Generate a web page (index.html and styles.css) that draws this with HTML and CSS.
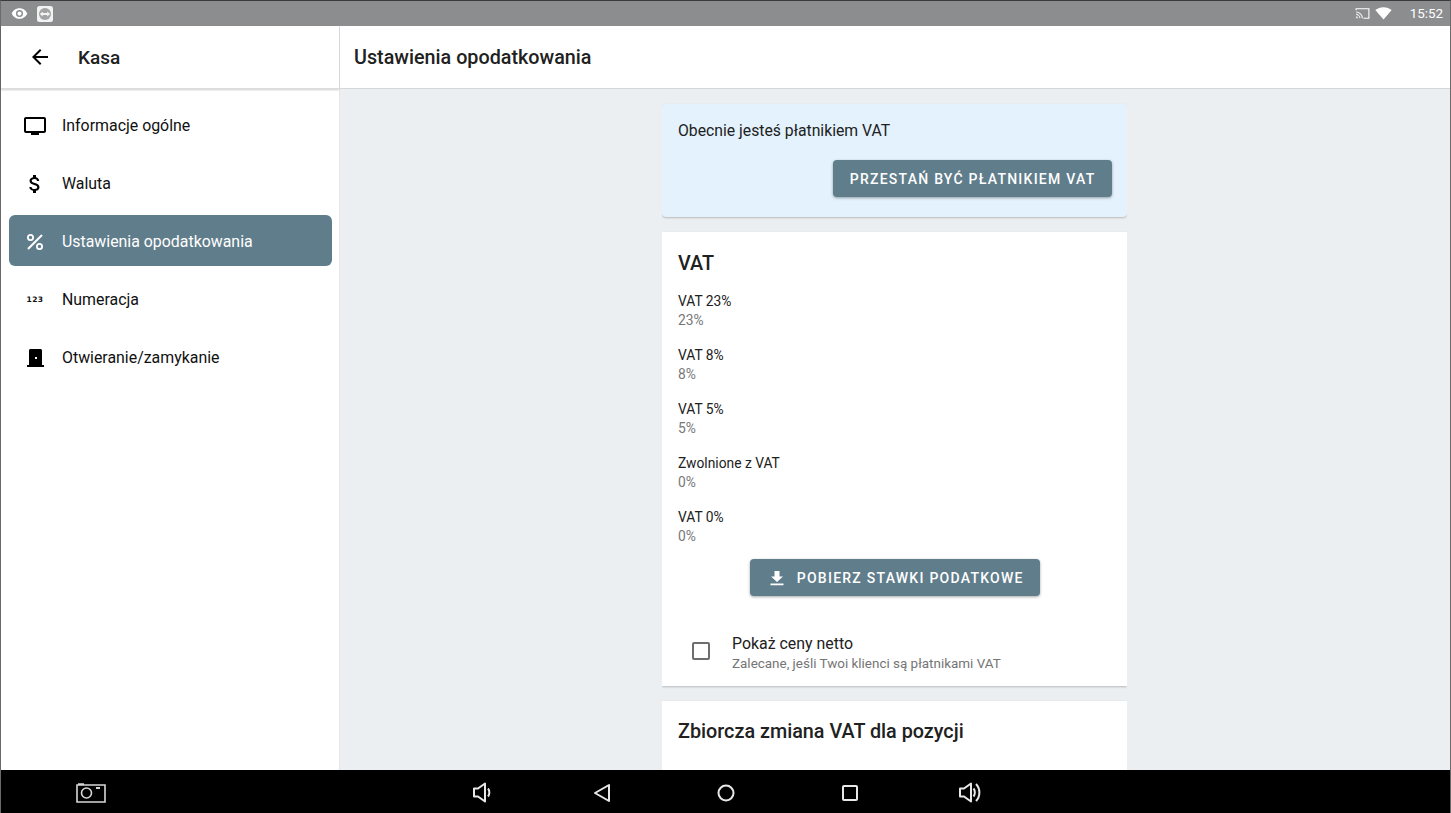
FILE: index.html
```html
<!DOCTYPE html>
<html>
<head>
<meta charset="utf-8">
<title>Ustawienia opodatkowania</title>
<link rel="stylesheet" href="styles.css">
</head>
<body>
<div class="screen">
	<div class="status">
		<div class="status-left">
			<svg class="ic-eye" viewBox="0 0 24 24"><path fill="#fff" d="M12 4.500C7 4.500 2.700 7.600 1 12c1.700 4.400 6 7.500 11 7.500s9.300-3.100 11-7.500c-1.700-4.400-6-7.500-11-7.500zM12 17a5 5 0 1 1 0-10 5 5 0 0 1 0 10zm0-8a3 3 0 1 0 0 6 3 3 0 0 0 0-6z"/></svg>
			<svg class="ic-tv" viewBox="0 0 16 16"><rect width="16" height="16" rx="2.500" fill="#f2f2f2"/><circle cx="8" cy="8" r="6" fill="#a3a3a3"/><path fill="#f2f2f2" d="M2.800 8l3-2.600v1.700h4.400V5.400l3 2.600-3 2.600V8.900H5.800v1.700z"/></svg>
		</div>
		<div class="status-right">
			<svg class="ic-cast" viewBox="0 0 16 12"><path fill="none" stroke="#fff" stroke-width="1.200" d="M1 2.500V.8h14v10.400H9"/><path fill="#fff" opacity=".85" d="M1 3.700a7.500 7.500 0 0 1 7.500 7.500H7.200A6.200 6.200 0 0 0 1 5zm0 2.700a4.800 4.800 0 0 1 4.800 4.800H4.500A3.500 3.500 0 0 0 1 7.700zm0 2.700a2.100 2.100 0 0 1 2.100 2.100H1z"/></svg>
			<svg class="ic-wifi" viewBox="0 0 18 14"><path fill="#fff" d="M9 13.500L.2 3.300C2.500 1.300 5.600.2 9 .2s6.500 1.100 8.800 3.100z"/></svg>
			<span class="clock">15:52</span>
		</div>
	</div>

	<div class="app">
		<div class="side">
			<div class="side-head">
				<svg class="ic-back" viewBox="0 0 24 24"><path d="M20 11H7.800l5.600-5.600L12 4l-8 8 8 8 1.400-1.400L7.800 13H20z"/></svg>
				<span class="side-title">Kasa</span>
			</div>
			<div class="menu">
				<div class="item">
					<span class="item-ic"><svg width="24" height="24" viewBox="0 0 24 24"><path d="M21 3H3c-1.100 0-2 .9-2 2v12c0 1.100.9 2 2 2h5v2h8v-2h5c1.100 0 2-.9 2-2V5c0-1.100-.9-2-2-2zm0 14H3V5h18z"/></svg></span>
					Informacje ogólne
				</div>
				<div class="item">
					<span class="item-ic"><svg width="24" height="24" viewBox="0 0 24 24"><path d="M11.800 10.900c-2.270-.59-3-1.200-3-2.150 0-1.090 1.010-1.850 2.700-1.850 1.780 0 2.440.85 2.500 2.100h2.210c-.07-1.720-1.120-3.300-3.210-3.810V3h-3v2.160c-1.940.42-3.500 1.680-3.500 3.610 0 2.310 1.910 3.460 4.700 4.130 2.500.6 3 1.480 3 2.410 0 .69-.49 1.790-2.700 1.790-2.060 0-2.870-.92-2.980-2.100h-2.200c.12 2.190 1.760 3.420 3.680 3.830V21h3v-2.150c1.950-.37 3.500-1.500 3.500-3.550 0-2.840-2.430-3.810-4.700-4.400z"/></svg></span>
					Waluta
				</div>
				<div class="item active">
					<span class="item-ic"><svg width="24" height="24" viewBox="0 0 24 24"><path fill="#fff" d="M7.500 4A3.500 3.500 0 1 0 7.500 11 3.500 3.500 0 0 0 7.500 4zm0 5.200a1.700 1.700 0 1 1 0-3.400 1.700 1.700 0 0 1 0 3.400zM16.500 13a3.500 3.500 0 1 0 0 7 3.500 3.500 0 0 0 0-7zm0 5.200a1.700 1.700 0 1 1 0-3.400 1.700 1.700 0 0 1 0 3.400zM18.300 4.300l1.400 1.400L5.700 19.700l-1.400-1.400z"/></svg></span>
					Ustawienia opodatkowania
				</div>
				<div class="item">
					<span class="item-ic num-ic">123</span>
					Numeracja
				</div>
				<div class="item">
					<span class="item-ic"><svg width="24" height="24" viewBox="0 0 24 24"><path d="M19 19V4.500C19 3.700 18.300 3 17.500 3h-10C6.700 3 6 3.700 6 4.500V19H4v2h17v-2zm-5-6h-2v-2h2z"/></svg></span>
					Otwieranie/zamykanie
				</div>
			</div>
		</div>

		<div class="main">
			<div class="top-bar">Ustawienia opodatkowania</div>
			<div class="content">
				<div class="card card-blue">
					<p class="vat-note">Obecnie jesteś płatnikiem VAT</p>
					<div class="right-btn"><span class="btn">PRZESTAŃ BYĆ PŁATNIKIEM VAT</span></div>
				</div>

				<div class="card card-vat">
					<h3>VAT</h3>
					<div class="rate"><div>VAT 23%</div><small>23%</small></div>
					<div class="rate"><div>VAT 8%</div><small>8%</small></div>
					<div class="rate"><div>VAT 5%</div><small>5%</small></div>
					<div class="rate"><div>Zwolnione z VAT</div><small>0%</small></div>
					<div class="rate"><div>VAT 0%</div><small>0%</small></div>
					<div class="center-btn">
						<span class="btn btn-dl">
							<svg width="18" height="18" viewBox="0 0 18 18"><path fill="#fff" d="M6.500 2h5v5.500H15L9 13 3 7.500h3.500zM2.500 14.600h13v1.700h-13z"/></svg>
							POBIERZ STAWKI PODATKOWE
						</span>
					</div>
					<div class="check-row">
						<span class="box"></span>
						<div>
							<div class="check-title">Pokaż ceny netto</div>
							<div class="check-sub">Zalecane, jeśli Twoi klienci są płatnikami VAT</div>
						</div>
					</div>
				</div>

				<div class="card card-bulk">
					<h3>Zbiorcza zmiana VAT dla pozycji</h3>
				</div>
			</div>
		</div>
	</div>

	<div class="nav">
		<svg class="nav-cam" width="30" height="21" viewBox="0 0 30 21"><g fill="none" stroke="#d8d8d8" stroke-width="1.600"><path d="M1 3h28v17H1zM2 2h6"/><circle cx="10.500" cy="11" r="5"/></g><path fill="#d8d8d8" d="M20 5h4v2h-4z"/></svg>
		<svg class="nav-vol" width="20" height="21" viewBox="0 0 20 21"><g fill="none" stroke="#e8e8e8" stroke-width="2" stroke-linejoin="round"><path d="M2 6.500h4L13 1.500v18l-7-5H2z"/><path d="M16 6.500c1.800 2.200 1.800 5.800 0 8"/></g></svg>
		<svg class="nav-back" width="18" height="20" viewBox="0 0 18 20"><path fill="none" stroke="#e8e8e8" stroke-width="2" stroke-linejoin="round" d="M16 2v16L2 10z"/></svg>
		<svg class="nav-home" width="18" height="18" viewBox="0 0 18 18"><circle cx="9" cy="9" r="7.500" fill="none" stroke="#e8e8e8" stroke-width="2"/></svg>
		<svg class="nav-recent" width="16" height="16" viewBox="0 0 16 16"><rect x="1" y="1" width="14" height="14" rx="1" fill="none" stroke="#e8e8e8" stroke-width="2"/></svg>
		<svg class="nav-volup" width="24" height="21" viewBox="0 0 24 21"><g fill="none" stroke="#e8e8e8" stroke-width="2" stroke-linejoin="round"><path d="M2 6.500h4L13 1.500v18l-7-5H2z"/><path d="M15.500 6.500c1.800 2.200 1.800 5.800 0 8"/><path d="M18 2c4.500 4.500 4.500 12.500 0 17"/></g></svg>
	</div>
</div>
</body>
</html>
```

FILE: styles.css
```css
* {
  box-sizing: border-box;
}

html, body {
  margin: 0;
  height: 100%;
}

body {
  font-family: Roboto, "Liberation Sans", sans-serif;
  color: #212121;
  overflow: hidden;
}

.screen {
  width: 1451px;
  height: 813px;
  display: flex;
  flex-direction: column;
  border-left: 1px solid #6a6a6a;
  border-right: 1px solid #6a6a6a;
  border-top: 1px solid #3a3a3a;
}

/* status bar */
.status {
  height: 25px;
  background: #8c8d8f;
  display: flex;
  align-items: center;
  justify-content: space-between;
  padding: 0 7px 0 10px;
  flex: none;
}

.status-left, .status-right {
  display: flex;
  align-items: center;
}

.ic-eye {
  width: 17px;
  height: 17px;
  margin-right: 9px;
}

.ic-tv {
  width: 16px;
  height: 16px;
}

.ic-cast {
  width: 15px;
  height: 11px;
  margin-right: 5px;
}

.ic-wifi {
  width: 17px;
  height: 13px;
  margin-right: 18px;
}

.clock {
  color: #fff;
  font-size: 13.4px;
}

/* app */
.app {
  flex: 1;
  display: flex;
  min-height: 0;
}

.side {
  width: 339px;
  flex: none;
  background: #fff;
  border-right: 1px solid #e4e6e8;
}

.side-head {
  height: 63px;
  display: flex;
  align-items: center;
  padding-left: 27px;
  border-bottom: 1px solid #ddd;
  box-shadow: 0 1px 2px rgba(0,0,0,.2);
}

.ic-back {
  width: 24px;
  height: 24px;
}

.side-title {
  font-size: 19px;
  font-weight: 500;
  margin-left: 26px;
}

.menu {
  padding: 10px 7px 0 8px;
}

.item {
  height: 51px;
  margin-bottom: 7px;
  padding-top: 2px;
  display: flex;
  align-items: center;
  font-size: 15.9px;
  color: #111;
  border-radius: 6px;
}

.item-ic {
  width: 24px;
  height: 24px;
  margin: 0 15px 0 14px;
  display: block;
}

.num-ic {
  font-family: "DejaVu Sans", sans-serif;
  font-size: 7.5px;
  font-weight: 700;
  line-height: 24px;
  text-align: center;
  letter-spacing: .5px;
}

.active {
  background: #607d8b;
  color: #fff;
}

/* right part */
.main {
  flex: 1;
  min-width: 0;
  display: flex;
  flex-direction: column;
  background: #eceff1;
}

.top-bar {
  height: 63px;
  flex: none;
  background: #fff;
  border-bottom: 1px solid #d5d7d9;
  display: flex;
  align-items: center;
  padding: 1px 0 0 14px;
  font-size: 19.75px;
  font-weight: 500;
}

.content {
  flex: 1;
  overflow: hidden;
  width: 465px;
  margin: 0 323px 0 322px;
  padding-top: 15px;
}

.card {
  background: #fff;
  margin-bottom: 15px;
  box-shadow: 0 1px 2px rgba(0,0,0,.22);
  padding: 0 15px 0 16px;
}

.card h3 {
  margin: 0;
  font-size: 19.8px;
  font-weight: 500;
}

.card-blue {
  background: #e3f2fd;
  border-radius: 4px;
  height: 113px;
  padding-top: 18px;
}

.vat-note {
  margin: 0;
  font-size: 15.75px;
  line-height: 18px;
}

.right-btn {
  display: flex;
  justify-content: flex-end;
  margin-top: 20px;
}

.btn {
  display: inline-flex;
  align-items: center;
  height: 37px;
  padding: 0 16.5px;
  background: #607d8b;
  color: #fff;
  font-size: 14px;
  font-weight: 500;
  letter-spacing: 1.25px;
  border-radius: 4px;
  box-shadow: 0 1px 3px rgba(0,0,0,.35);
}

.btn-dl {
  padding-left: 18px;
}

.btn-dl svg {
  margin-right: 11px;
}

.card-vat {
  height: 454px;
  padding-top: 19px;
}

.card-vat h3 {
  line-height: 26px;
  margin-bottom: 15px;
}

.rate {
  height: 54px;
  font-size: 13.8px;
  line-height: 19px;
}

.rate small {
  font-size: 13.8px;
  color: #777;
}

.center-btn {
  display: flex;
  justify-content: center;
  margin: -3px -1px 0 -1px;
}

.check-row {
  display: flex;
  margin-top: 38px;
  padding-left: 14px;
}

.box {
  width: 18px;
  height: 18px;
  margin: 8px 22px 0 0;
  border: 2px solid #6e6e6e;
  border-radius: 2px;
}

.check-title {
  font-size: 15.9px;
  line-height: 20px;
}

.check-sub {
  font-size: 13.45px;
  line-height: 20px;
  color: #757575;
}

.card-bulk {
  height: 100px;
  padding-top: 18px;
}

.card-bulk h3 {
  line-height: 26px;
}

/* android nav */
.nav {
  height: 43px;
  flex: none;
  background: #000;
  position: relative;
}

.nav svg {
  position: absolute;
}

.nav-cam { left: 75px; top: 12px; }
.nav-vol { left: 471px; top: 12px; }
.nav-back { left: 592px; top: 13px; }
.nav-home { left: 716px; top: 14px; }
.nav-recent { left: 841px; top: 15px; }
.nav-volup { left: 957px; top: 12px; }
```
